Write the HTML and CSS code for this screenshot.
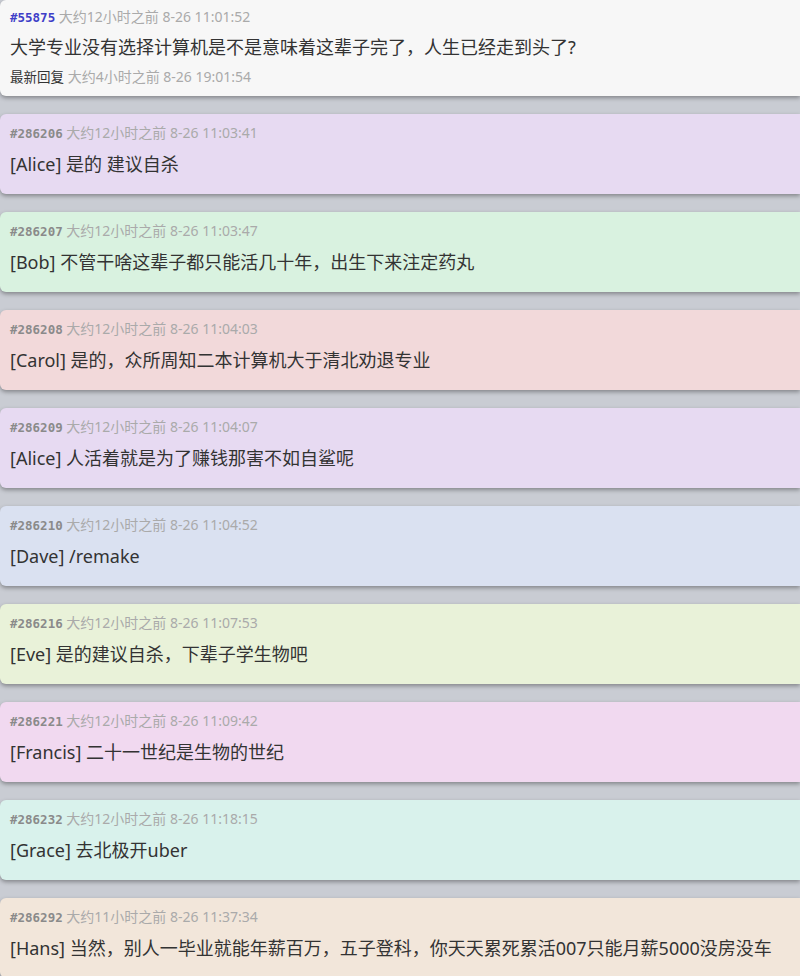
FILE: index.html
```html
<!DOCTYPE html>
<html lang="zh-CN">
<head>
  <meta charset="UTF-8" />
  <meta name="viewport" content="width=device-width, initial-scale=1" />
  <title>树洞</title>
  <link rel="stylesheet" href="styles.css">
</head>
<body>
  <div class="thread">
    <div class="card card-main">
      <div class="meta">
        <span class="pid pid-main">#55875</span>
        <span class="time">大约12小时之前 8-26 11:01:52</span>
      </div>
      <div class="text">大学专业没有选择计算机是不是意味着这辈子完了，人生已经走到头了?</div>
      <div class="meta meta-foot">
        <span class="latest">最新回复</span>
        <span class="time">大约4小时之前 8-26 19:01:54</span>
      </div>
    </div>

    <div class="card c-purple">
      <div class="meta"><span class="pid">#286206</span> <span class="time">大约12小时之前 8-26 11:03:41</span></div>
      <div class="text">[Alice] 是的 建议自杀</div>
    </div>

    <div class="card c-green">
      <div class="meta"><span class="pid">#286207</span> <span class="time">大约12小时之前 8-26 11:03:47</span></div>
      <div class="text">[Bob] 不管干啥这辈子都只能活几十年，出生下来注定药丸</div>
    </div>

    <div class="card c-red">
      <div class="meta"><span class="pid">#286208</span> <span class="time">大约12小时之前 8-26 11:04:03</span></div>
      <div class="text">[Carol] 是的，众所周知二本计算机大于清北劝退专业</div>
    </div>

    <div class="card c-purple">
      <div class="meta"><span class="pid">#286209</span> <span class="time">大约12小时之前 8-26 11:04:07</span></div>
      <div class="text">[Alice] 人活着就是为了赚钱那害不如自鲨呢</div>
    </div>

    <div class="card c-blue">
      <div class="meta"><span class="pid">#286210</span> <span class="time">大约12小时之前 8-26 11:04:52</span></div>
      <div class="text">[Dave] /remake</div>
    </div>

    <div class="card c-lime">
      <div class="meta"><span class="pid">#286216</span> <span class="time">大约12小时之前 8-26 11:07:53</span></div>
      <div class="text">[Eve] 是的建议自杀，下辈子学生物吧</div>
    </div>

    <div class="card c-pink">
      <div class="meta"><span class="pid">#286221</span> <span class="time">大约12小时之前 8-26 11:09:42</span></div>
      <div class="text">[Francis] 二十一世纪是生物的世纪</div>
    </div>

    <div class="card c-teal">
      <div class="meta"><span class="pid">#286232</span> <span class="time">大约12小时之前 8-26 11:18:15</span></div>
      <div class="text">[Grace] 去北极开uber</div>
    </div>

    <div class="card c-beige">
      <div class="meta"><span class="pid">#286292</span> <span class="time">大约11小时之前 8-26 11:37:34</span></div>
      <div class="text">[Hans] 当然，别人一毕业就能年薪百万，五子登科，你天天累死累活007只能月薪5000没房没车</div>
    </div>
  </div>
</body>
</html>
```

FILE: styles.css
```css
body {
  margin: 0;
  background: #c9ccd3;
  font-family: "Noto Sans", "Noto Sans CJK SC", sans-serif;
  color: #333;
  overflow: hidden;
}

.thread {
  display: flex;
  flex-direction: column;
  gap: 18px;
}

.card {
  background: #f7f7f7;
  border-radius: 6px 0 0 6px;
  box-shadow: 0 2px 4px rgba(0,0,0,0.35);
  padding: 10px 10px 16px;
  height: 80px;
  box-sizing: border-box;
}

.card-main {
  padding: 8px 10px 10px;
  height: 96px;
}

.meta {
  font-size: 14px;
  line-height: 18px;
  white-space: nowrap;
}

.pid {
  font-family: "DejaVu Sans Mono", monospace;
  font-weight: bold;
  font-size: 12.5px;
  color: #8a8a8a;
}

.pid-main {
  color: #3f3fc8;
}

.time {
  color: #aaa;
}

.latest {
  color: #333;
  font-size: 13.5px;
}

.text {
  margin-top: 8px;
  font-size: 18px;
  line-height: 26px;
  white-space: nowrap;
}

.card-main .text {
  margin-top: 7px;
}

.meta-foot {
  margin-top: 8px;
}

/* reply colours */
.c-purple { background: #e7daf2; }
.c-green  { background: #d9f2e0; }
.c-red    { background: #f2d9da; }
.c-blue   { background: #dae1f1; }
.c-lime   { background: #e9f2d9; }
.c-pink   { background: #f1d9f0; }
.c-teal   { background: #d9f2ec; }
.c-beige  { background: #f2e6da; }
```
